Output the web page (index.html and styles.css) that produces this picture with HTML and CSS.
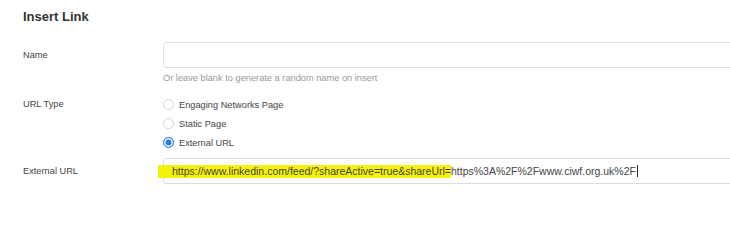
FILE: index.html
```html
<!DOCTYPE html>
<html lang="en">
<head>
  <meta charset="UTF-8">
  <title>Insert Link</title>
  <link rel="stylesheet" href="styles.css">
</head>
<body>
  <div class="panel">
    <h1 class="title">Insert Link</h1>

    <div class="field">
      <label class="label">Name</label>
      <div class="control">
        <div class="input"></div>
        <p class="hint">Or leave blank to generate a random name on insert</p>
      </div>
    </div>

    <div class="field field-radios">
      <label class="label label-radio">URL Type</label>
      <div class="control">
        <div class="option"><span class="radio"></span>Engaging Networks Page</div>
        <div class="option"><span class="radio"></span>Static Page</div>
        <div class="option"><span class="radio checked"></span>External URL</div>
      </div>
    </div>

    <div class="field field-url">
      <label class="label">External URL</label>
      <div class="control">
        <div class="input input-text"><span class="marker">https://www.linkedin.com/feed/?shareActive=true&amp;shareUrl=</span>https%3A%2F%2Fwww.ciwf.org.uk%2F<span class="caret"></span></div>
      </div>
    </div>
  </div>
</body>
</html>
```

FILE: styles.css
```css
body {
  margin: 0;
  overflow: hidden;
  background: #fff;
  font-family: 'Liberation Sans', Arial, sans-serif;
  color: #444;
}
.panel {
  padding: 8px 0 0 23px;
}
.title {
  margin: 0 0 16px;
  font-size: 13px;
  line-height: 18px;
  font-weight: bold;
  color: #333;
}
.field {
  display: grid;
  grid-template-columns: 140px 640px;
}
.label {
  font-size: 9.25px;
  line-height: 26px;
  color: #444;
}
.input {
  height: 26px;
  box-sizing: border-box;
  border: 1px solid #dcdde0;
  border-radius: 3px;
  background: #fff;
}
.hint {
  margin: 4px 0 0;
  font-size: 9.25px;
  line-height: 12px;
  color: #999;
}
.field-radios {
  margin-top: 11px;
}
.label-radio {
  line-height: 19px;
}
.option {
  display: flex;
  align-items: center;
  height: 19px;
  font-size: 9.25px;
  color: #444;
}
.radio {
  width: 11px;
  height: 11px;
  box-sizing: border-box;
  border: 1px solid #d6d6d6;
  border-radius: 50%;
  margin-right: 5px;
  background: #fff;
}
.radio.checked {
  border: 1.5px solid #2b7be0;
  box-shadow: inset 0 0 0 1.5px #fff;
  background: #2b7be0;
}
.field-url {
  margin-top: 6px;
}
.input-text {
  display: flex;
  align-items: center;
  padding-left: 8px;
  font-size: 10.5px;
  color: #444;
  white-space: nowrap;
}
.marker {
  background: #f5f205;
  padding: 1px 0 1px 14px;
  margin-left: -14px;
  line-height: 11px;
}
.caret {
  display: inline-block;
  width: 1px;
  height: 12px;
  background: #333;
  margin-left: 1px;
}
```
